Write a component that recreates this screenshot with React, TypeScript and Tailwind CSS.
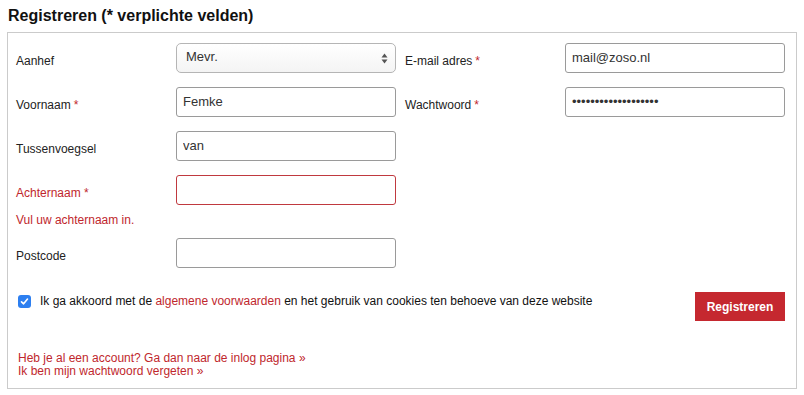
import type { ReactNode } from 'react';

const RED = 'text-[#c0272d]';

function Label({ children, required, error }: { children: ReactNode; required?: boolean; error?: boolean }) {
  return (
    <div className={`w-[160px] h-[30px] flex items-center pt-[6px] text-[12px] ${error ? RED : 'text-[#222]'}`}>
      {children}
      {required && <span className={`ml-[3px] ${RED}`}>*</span>}
    </div>
  );
}

function TextInput({ value = '', type = 'text', error }: { value?: string; type?: string; error?: boolean }) {
  return (
    <input
      type={type}
      defaultValue={value}
      className={`w-[220px] h-[30px] px-[6px] pb-[2px] text-[13px] text-[#333] bg-white rounded-[3px] border outline-none ${
        error ? 'border-[#c0393f]' : 'border-[#9a9a9a]'
      }`}
    />
  );
}

function Row({ children, className = '' }: { children: ReactNode; className?: string }) {
  return <div className={`flex ${className}`}>{children}</div>;
}

export default function App() {
  return (
    <div className="w-[804px] h-[395px] bg-white font-['Liberation_Sans',Arial,sans-serif]">
      <h1 className="pt-[6px] pl-[8px] text-[16px] leading-[20px] font-bold text-[#111]">
        Registreren (* verplichte velden)
      </h1>

      <div className="mt-[6px] ml-[7px] w-[790px] border border-[#cbcbcb] pt-[10px] pl-[8px] pb-[10px]">
        <div className="flex gap-[9px]">
          {/* left column */}
          <div className="flex flex-col">
            <Row>
              <Label>Aanhef</Label>
              <div className="relative w-[220px] h-[30px] rounded-[5px] border border-[#b5b5b5] bg-gradient-to-b from-white to-[#f4f4f4] flex items-center pl-[9px] pb-[2px] text-[13px] text-[#333]">
                Mevr.
                <svg className="absolute right-[7px] top-[9px]" width="7" height="11" viewBox="0 0 7 11">
                  <path d="M3.5 0.5 L6.5 4.5 L0.5 4.5 Z" fill="#555" />
                  <path d="M3.5 10.5 L6.5 6.5 L0.5 6.5 Z" fill="#555" />
                </svg>
              </div>
            </Row>
            <Row className="mt-[14px]">
              <Label required>Voornaam</Label>
              <TextInput value="Femke" />
            </Row>
            <Row className="mt-[14px]">
              <Label>Tussenvoegsel</Label>
              <TextInput value="van" />
            </Row>
            <Row className="mt-[14px]">
              <Label error>Achternaam *</Label>
              <TextInput error />
            </Row>
            <div className={`h-[33px] pt-[8px] text-[12px] leading-[14px] ${RED}`}>Vul uw achternaam in.</div>
            <Row>
              <Label>Postcode</Label>
              <TextInput />
            </Row>
          </div>

          {/* right column */}
          <div className="flex flex-col">
            <Row>
              <Label required>E-mail adres</Label>
              <TextInput value="mail@zoso.nl" />
            </Row>
            <Row className="mt-[14px]">
              <Label required>Wachtwoord</Label>
              <TextInput type="password" value="abcdefghijklmnopqrs" />
            </Row>
          </div>
        </div>

        <div className="mt-[24px] flex items-start justify-between pr-[11px]">
          <div className="flex items-start pl-[2px] pt-[1px] text-[12px] leading-[16px] text-[#111]">
            <span className="mt-[2px] w-[13px] h-[13px] rounded-[3px] bg-[#2d7ff0] flex items-center justify-center">
              <svg width="9" height="9" viewBox="0 0 9 9">
                <path d="M1.5 4.8 L3.6 6.8 L7.5 2" stroke="white" strokeWidth="1.6" fill="none" strokeLinecap="round" strokeLinejoin="round" />
              </svg>
            </span>
            <span className="ml-[9px]">
              Ik ga akkoord met de <span className={RED}>algemene voorwaarden</span> en het gebruik van cookies ten behoeve van deze website
            </span>
          </div>
          <button className="w-[90px] h-[29px] bg-[#c5282f] text-white text-[12px] font-bold">Registreren</button>
        </div>

        <div className={`mt-[31px] pl-[2px] text-[12px] leading-[13px] ${RED}`}>
          <p>Heb je al een account? Ga dan naar de inlog pagina »</p>
          <p>Ik ben mijn wachtwoord vergeten »</p>
        </div>
      </div>
    </div>
  );
}
